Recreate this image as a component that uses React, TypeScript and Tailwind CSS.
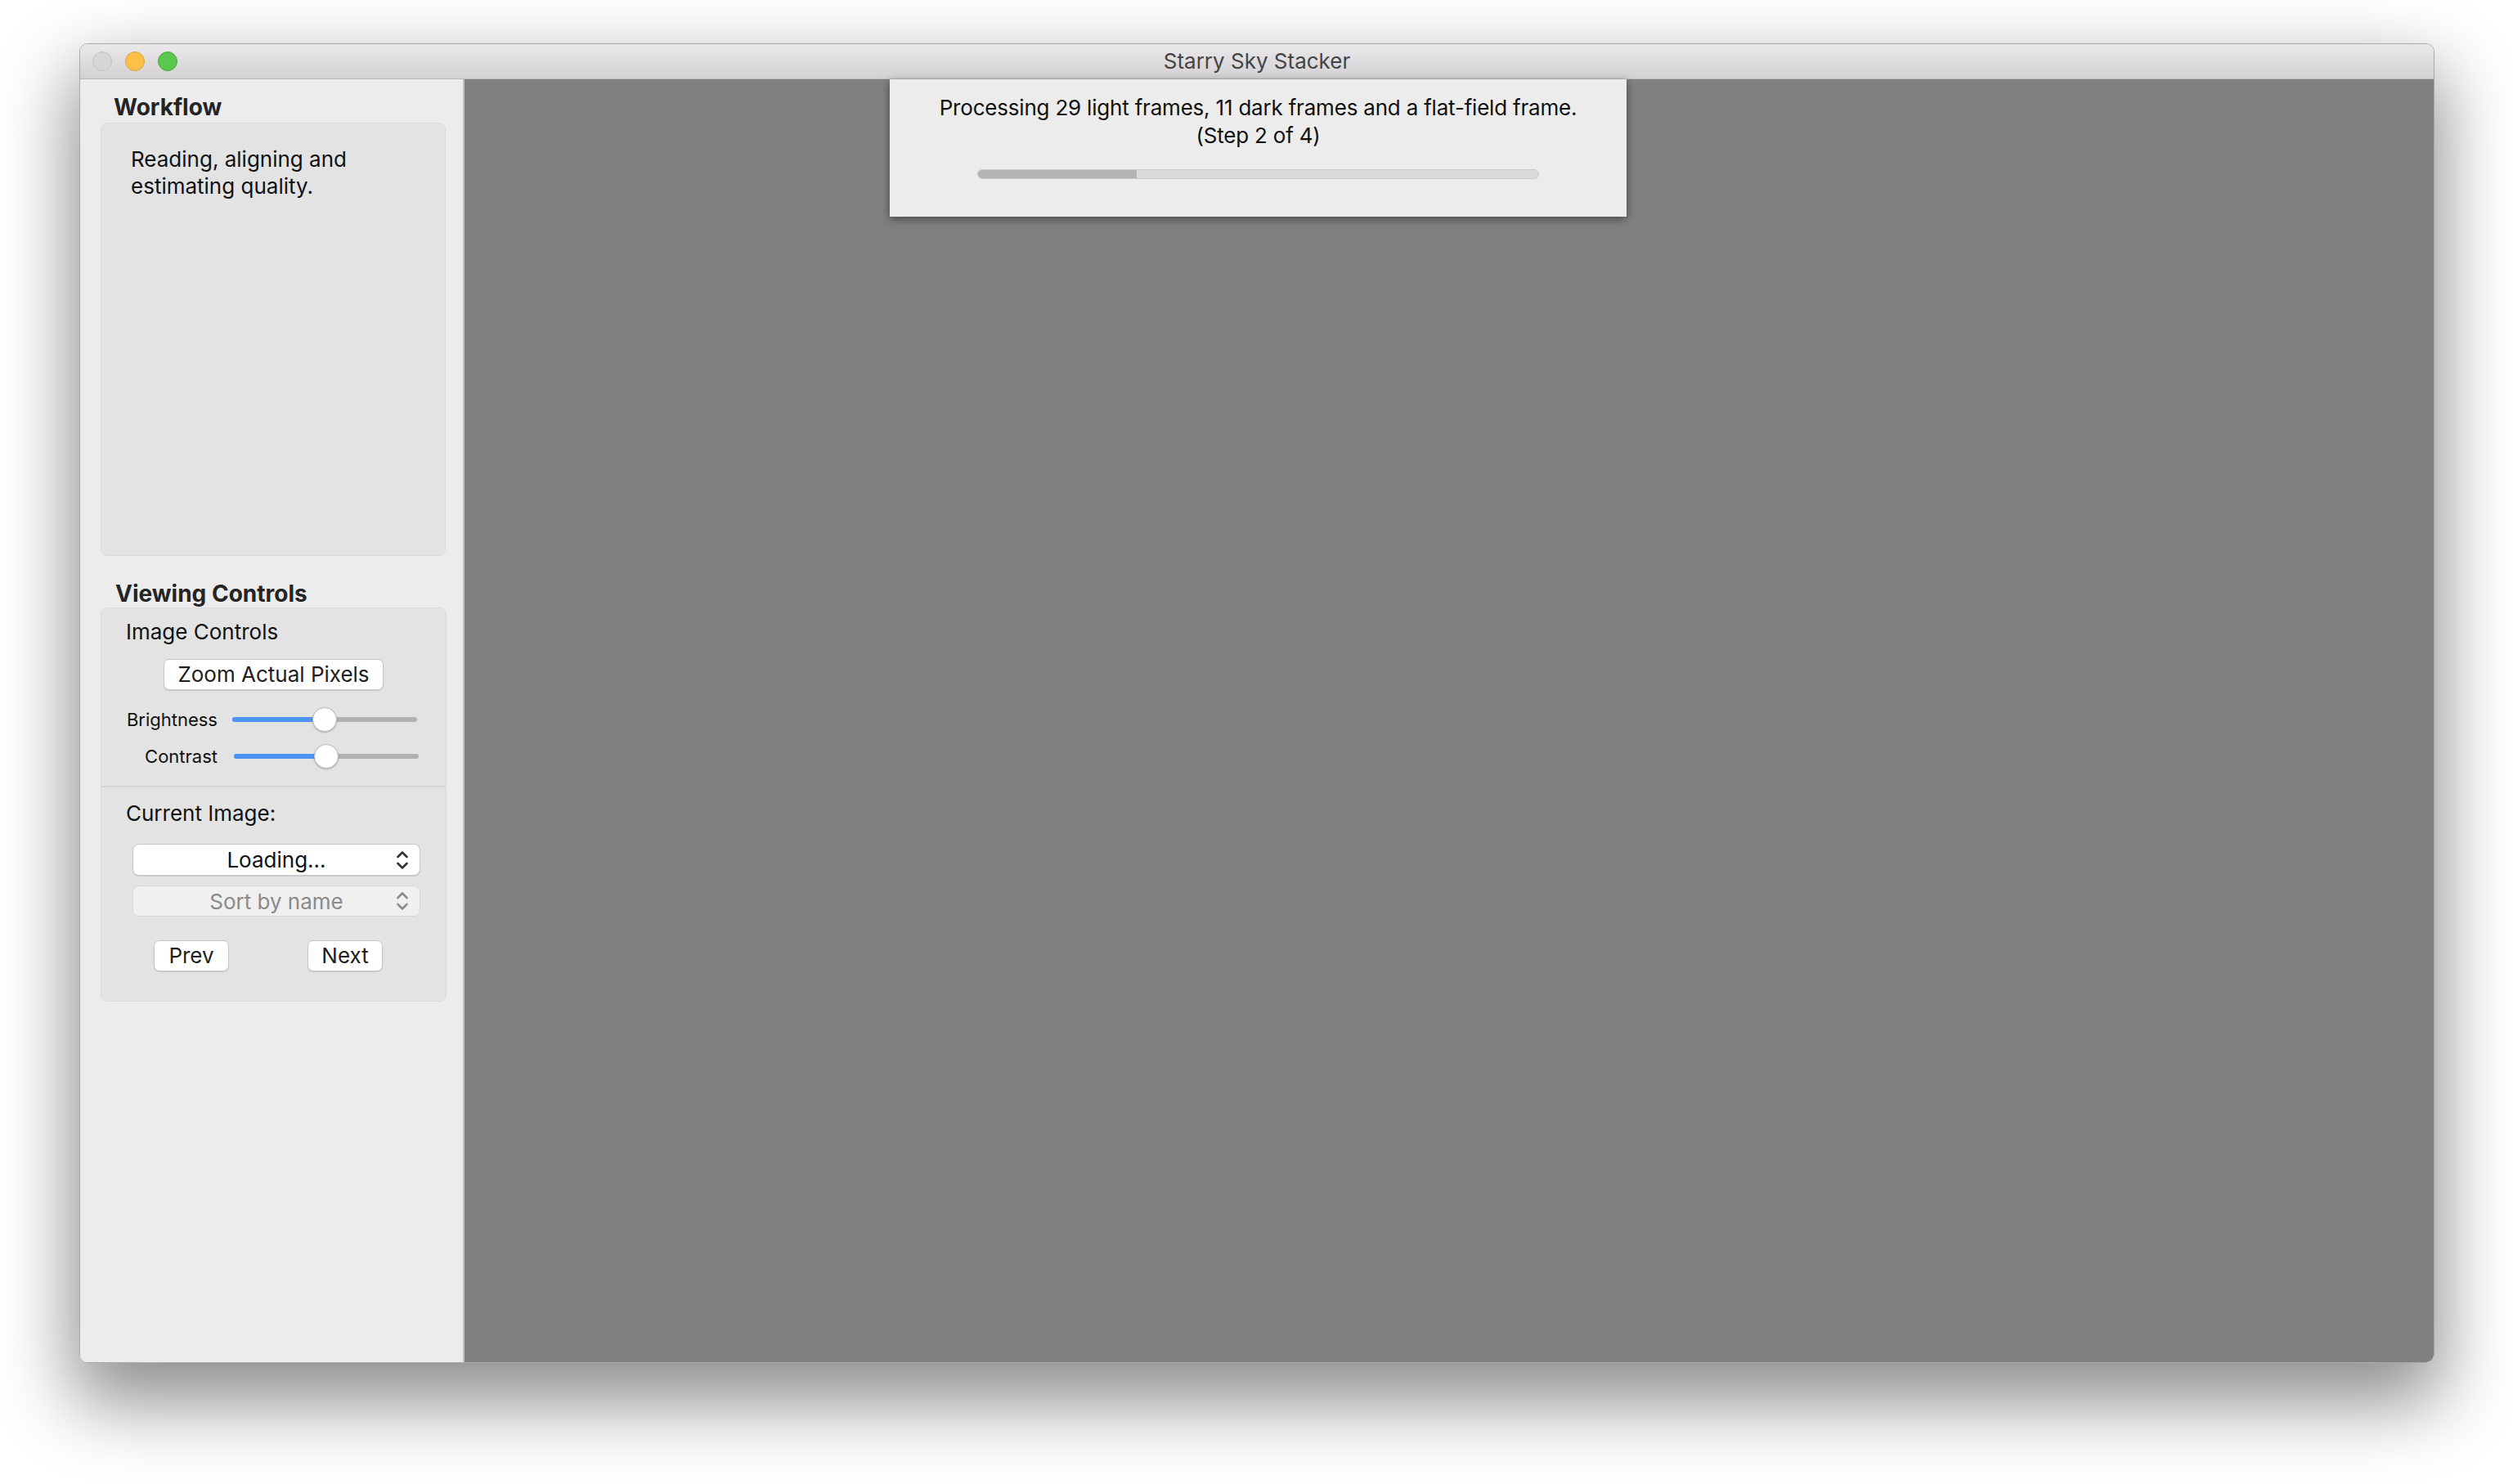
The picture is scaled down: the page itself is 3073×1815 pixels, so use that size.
import React from 'react';

const FONT = 'font-["Inter","Noto_Sans",sans-serif]';

function Chevrons({ color }: { color: string }) {
  return (
    <svg width="16" height="26" viewBox="0 0 16 26" fill="none" stroke={color} strokeWidth="2.6" strokeLinecap="round" strokeLinejoin="round">
      <path d="M2.5 9 L8 3.5 L13.5 9" />
      <path d="M2.5 17 L8 22.5 L13.5 17" />
    </svg>
  );
}

function Slider({ value }: { value: number }) {
  return (
    <div className="relative h-[30px] w-[226px] flex items-center">
      <div className="h-[6px] w-full rounded-full bg-[#b1b1b1]" />
      <div className="absolute left-0 top-[12px] h-[6px] rounded-full bg-[#4d93f5]" style={{ width: `${value}%` }} />
      <div
        className="absolute top-0 h-[30px] w-[30px] -translate-x-1/2 rounded-full border border-[#bdbdbd] bg-white shadow-[0_1px_2px_rgba(0,0,0,0.25)]"
        style={{ left: `${value}%` }}
      />
    </div>
  );
}

function Button({ children, className }: { children: React.ReactNode; className?: string }) {
  return (
    <div
      className={`flex h-[38px] items-center justify-center rounded-[7px] border border-[#c6c6c6] bg-white text-[26px] leading-none text-[#1e1e1e] shadow-[0_1px_1px_rgba(0,0,0,0.12)] ${className ?? ''}`}
    >
      {children}
    </div>
  );
}

export default function App() {
  return (
    <div className={`min-h-[1815px] w-[3073px] bg-white pl-[97px] pt-[53px] ${FONT}`}>
      <div className="relative flex h-[1614px] w-[2880px] flex-col overflow-hidden rounded-[10px] border border-[#a9a9a9] shadow-[0_40px_90px_8px_rgba(0,0,0,0.45)]">
        {/* title bar */}
        <div className="relative flex h-[43px] shrink-0 items-center border-b border-[#b9b9b9] bg-gradient-to-b from-[#eae8ea] to-[#d3d1d3]">
          <div className="flex gap-[16px] pl-[15px]">
            <span className="h-[24px] w-[24px] rounded-full border border-[#c3c3c3] bg-[#d6d6d6]" />
            <span className="h-[24px] w-[24px] rounded-full border border-[#dfa33a] bg-[#fbc04a]" />
            <span className="h-[24px] w-[24px] rounded-full border border-[#4aa83d] bg-[#5ac84f]" />
          </div>
          <div className="absolute inset-x-0 text-center text-[26px] leading-none text-[#444]">Starry Sky Stacker</div>
        </div>

        <div className="relative flex flex-1">
          {/* sidebar */}
          <div className="flex w-[470px] shrink-0 flex-col border-r-2 border-[#c4c4c4] bg-[#ececec] px-[25px]">
            <div className="mt-[17px] pl-[16px] text-[28px] font-bold leading-[34px] text-[#242424]">Workflow</div>
            <div className="mt-[2px] h-[530px] w-[422px] rounded-[8px] border border-[#dcdcdc] bg-[#e3e3e3] pl-[36px] pt-[27px] text-[26px] leading-[33px] text-[#111]">
              Reading, aligning and
              <br />
              estimating quality.
            </div>

            <div className="mt-[29px] pl-[18px] text-[28px] font-bold leading-[34px] text-[#242424]">Viewing Controls</div>
            <div className="flex w-[423px] flex-col rounded-[8px] border border-[#dcdcdc] bg-[#e3e3e3] pb-[36px] pt-[12px]">
              <div className="pl-[30px] text-[26px] leading-[33px] text-[#111]">Image Controls</div>
              <Button className="mx-auto mt-[17px] w-[269px]">Zoom Actual Pixels</Button>

              <div className="mt-[21px] flex items-center">
                <div className="w-[144px] pr-[2px] text-right text-[22px] leading-[30px] text-[#111]">Brightness</div>
                <div className="ml-[16px]">
                  <Slider value={50} />
                </div>
              </div>
              <div className="mt-[15px] flex items-center">
                <div className="w-[144px] pr-[2px] text-right text-[22px] leading-[30px] text-[#111]">Contrast</div>
                <div className="ml-[18px]">
                  <Slider value={50} />
                </div>
              </div>

              <div className="mt-[21px] h-[2px] w-full bg-[#d3d3d3]" />

              <div className="mt-[15px] pl-[30px] text-[26px] leading-[33px] text-[#111]">Current Image:</div>

              <div className="relative ml-[38px] mt-[21px] flex h-[39px] w-[352px] items-center justify-center rounded-[8px] border border-[#c9c9c9] bg-white text-[26px] text-[#111] shadow-[0_1px_1px_rgba(0,0,0,0.12)]">
                Loading...
                <span className="absolute right-[13px] top-[6px]">
                  <Chevrons color="#333" />
                </span>
              </div>
              <div className="relative ml-[38px] mt-[12px] flex h-[38px] w-[352px] items-center justify-center rounded-[8px] border border-[#d8d8d8] bg-[#f0f0f0] text-[26px] text-[#8a8a8a]">
                Sort by name
                <span className="absolute right-[13px] top-[5px]">
                  <Chevrons color="#8c8c8c" />
                </span>
              </div>

              <div className="ml-[64px] mt-[29px] flex">
                <Button className="w-[92px]">Prev</Button>
                <Button className="ml-[96px] w-[92px]">Next</Button>
              </div>
            </div>
          </div>

          {/* image area */}
          <div className="flex-1 bg-[#808080]" />

          {/* progress sheet */}
          <div className="absolute left-[990px] top-0 flex h-[168px] w-[901px] flex-col items-center bg-[#ececec] pt-[18px] shadow-[0_3px_10px_rgba(0,0,0,0.45)]">
            <div className="text-center text-[26px] leading-[34px] tracking-[-0.2px] text-[#111]">
              Processing 29 light frames, 11 dark frames and a flat-field frame.
              <br />
              (Step 2 of 4)
            </div>
            <div className="mt-[24px] h-[12px] w-[687px] overflow-hidden rounded-full border border-[#c9c9c9] bg-[#dadada]">
              <div className="h-full bg-[#b3b3b3]" style={{ width: `${(195 / 687) * 100}%` }} />
            </div>
          </div>
        </div>
      </div>
    </div>
  );
}
